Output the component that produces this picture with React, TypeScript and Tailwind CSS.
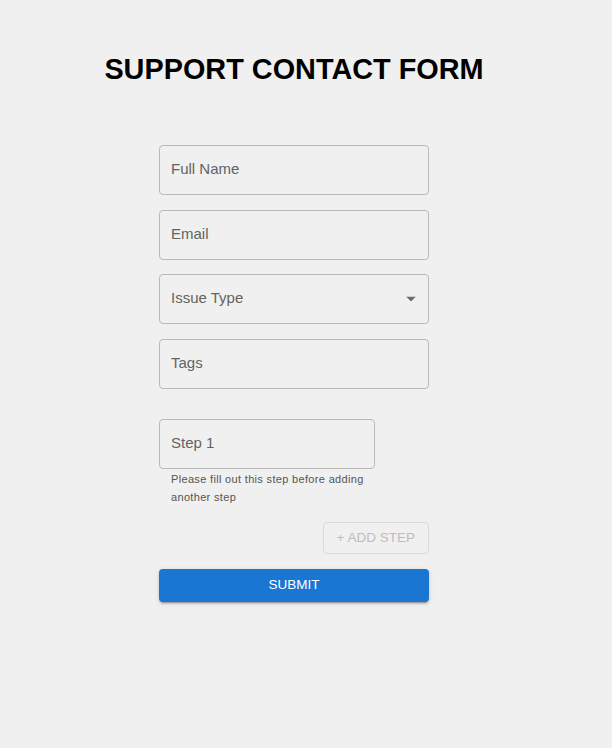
const fields = [
  { label: "Full Name", gap: "" },
  { label: "Email", gap: "mt-[15px]" },
  { label: "Issue Type", gap: "mt-[14px]" },
  { label: "Tags", gap: "mt-[15px]" },
];

function Field({ label, select, className = "" }: { label: string; select?: boolean; className?: string }) {
  return (
    <div
      className={`relative flex h-[50px] w-full items-center rounded border border-[#b9b9b9] px-[11px] pb-[2px] ${className}`}
    >
      <span className="text-[15px] text-[#636363]">{label}</span>
      {select && (
        <svg
          className="absolute right-[12px] top-1/2 -translate-y-1/2"
          width="10"
          height="5"
          viewBox="0 0 10 5"
        >
          <path d="M0 0l5 5 5-5z" fill="#6b6b6b" />
        </svg>
      )}
    </div>
  );
}

export default function App() {
  return (
    <div className="min-h-[748px] bg-[#f0f0f0] font-['Liberation_Sans',Arial,sans-serif]">
      <div className="flex w-[588px] flex-col items-center pt-[52px]">
        <h1 className="text-[28.85px] font-bold leading-[34px] text-black">
          SUPPORT CONTACT FORM
        </h1>

        <form className="mt-[59px] flex w-[270px] flex-col">
          {fields.map((f) => (
            <Field key={f.label} label={f.label} className={f.gap} select={f.label === "Issue Type"} />
          ))}

          <div className="mt-[30px] w-[216px]">
            <Field label="Step 1" />
            <p className="mt-[1px] pl-[12px] pr-[2px] text-[11px] leading-[18px] tracking-[0.03em] text-[#555]">
              Please fill out this step before adding another step
            </p>
          </div>

          <div className="mt-[16px] flex justify-end">
            <button
              type="button"
              disabled
              className="h-[32px] rounded border border-[#dadada] px-[13px] text-[13.5px] text-[#bdbdbd]"
            >
              + ADD STEP
            </button>
          </div>

          <button
            type="button"
            className="mt-[15px] h-[33px] rounded bg-[#1976d2] text-[13.5px] text-white shadow-[0_3px_1px_-2px_rgba(0,0,0,0.2),0_2px_2px_0_rgba(0,0,0,0.14),0_1px_5px_0_rgba(0,0,0,0.12)]"
          >
            SUBMIT
          </button>
        </form>
      </div>
    </div>
  );
}
